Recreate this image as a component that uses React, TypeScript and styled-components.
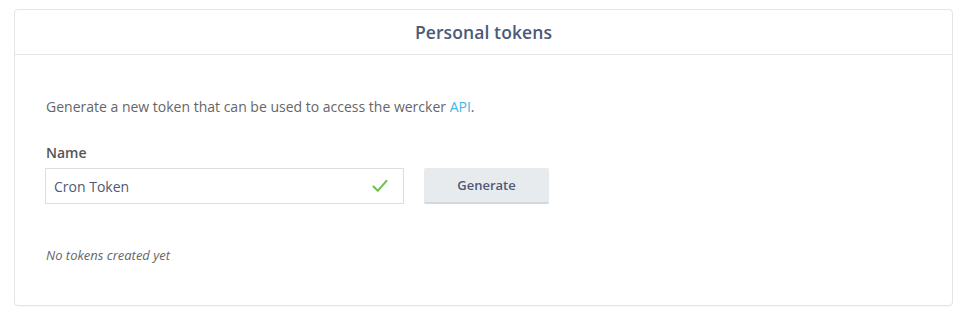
import React from "react";
import styled, { createGlobalStyle } from "styled-components";

const Global = createGlobalStyle`
  html, body { margin: 0; padding: 0; background: #ffffff; }
  body { font-family: "Open Sans", "Liberation Sans", sans-serif; }
`;

const Page = styled.div`
  padding: 9px 15px 10px 14px;
`;

const Card = styled.section`
  border: 1px solid #e4e4e4;
  border-radius: 4px;
  background: #fff;
  box-shadow: 0 1px 1px rgba(0, 0, 0, 0.03);
`;

const Header = styled.header`
  height: 44px;
  display: flex;
  align-items: center;
  justify-content: center;
  border-bottom: 1px solid #e6e6e6;
`;

const Title = styled.h2`
  margin: 0;
  font-size: 17.5px;
  font-weight: 600;
  color: #4c5a77;
  letter-spacing: 0.1px;
`;

const Body = styled.div`
  padding: 42px 30px 41px 30px;
  display: flex;
  flex-direction: column;
`;

const Lead = styled.p`
  margin: 0 0 0 1px;
  font-size: 14px;
  line-height: 20px;
  color: #666;
`;

const Link = styled.a`
  color: #3ab6e8;
  text-decoration: none;
`;

const Label = styled.label`
  margin: 26px 0 0 1px;
  font-size: 14px;
  font-weight: 600;
  line-height: 20px;
  color: #555;
`;

const Row = styled.div`
  margin-top: 5px;
  display: flex;
  align-items: flex-start;
  gap: 20px;
`;

const Field = styled.div`
  width: 359px;
  height: 36px;
  box-sizing: border-box;
  border: 1px solid #dedede;
  background: #fff;
  display: flex;
  align-items: center;
  padding: 0 8px;
`;

const Input = styled.input`
  flex: 1;
  border: none;
  outline: none;
  background: transparent;
  font-family: inherit;
  font-size: 14px;
  color: #4c5a77;
  padding: 0;
`;

const Check = styled.svg`
  width: 16px;
  height: 14px;
  margin-right: 7px;
`;

const Button = styled.button`
  width: 125px;
  height: 36px;
  box-sizing: border-box;
  border: none;
  border-bottom: 2px solid #d3d7da;
  border-radius: 2px;
  background: #e8ebed;
  font-family: inherit;
  font-size: 13px;
  font-weight: 600;
  color: #4c5a77;
  cursor: pointer;
  padding: 0;
`;

const Empty = styled.p`
  margin: 42px 0 0 1px;
  font-size: 13px;
  font-style: italic;
  line-height: 18px;
  color: #666;
`;

export default function App() {
  return (
    <>
      <Global />
      <Page>
        <Card>
          <Header>
            <Title>Personal tokens</Title>
          </Header>
          <Body>
            <Lead>
              Generate a new token that can be used to access the wercker{" "}
              <Link href="#">API</Link>.
            </Lead>
            <Label htmlFor="token-name">Name</Label>
            <Row>
              <Field>
                <Input id="token-name" defaultValue="Cron Token" />
                <Check viewBox="0 0 16 14" fill="none">
                  <path
                    d="M1.5 7.5 L5.8 11.8 L14.5 1.8"
                    stroke="#6cbf4a"
                    strokeWidth="2"
                    strokeLinecap="round"
                    strokeLinejoin="round"
                  />
                </Check>
              </Field>
              <Button>Generate</Button>
            </Row>
            <Empty>No tokens created yet</Empty>
          </Body>
        </Card>
      </Page>
    </>
  );
}
